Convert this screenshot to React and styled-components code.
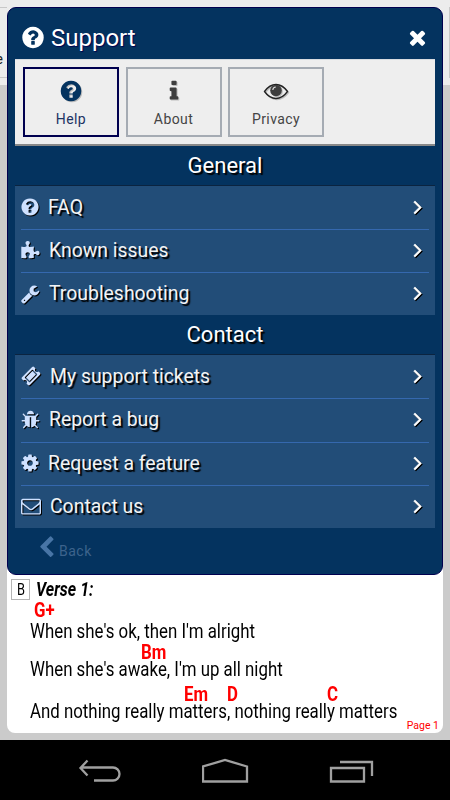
import React from "react";
import styled, { createGlobalStyle } from "styled-components";

const ICONS = {
	question: "M1024 1376v-192q0-14-9-23t-23-9h-192q-14 0-23 9t-9 23v192q0 14 9 23t23 9h192q14 0 23-9t9-23zm256-672q0-88-55.5-163t-138.5-116-170-41q-243 0-371 213-15 24 8 42l132 100q7 6 19 6 16 0 25-12 53-68 86-92 34-24 86-24 48 0 85.5 26t37.5 59q0 38-20 61t-68 45q-63 28-115.5 86.5t-52.5 125.5v36q0 14 9 23t23 9h192q14 0 23-9t9-23q0-19 21.5-49.5t54.5-49.5q32-18 49-28.5t46-35 44.5-48 28-60.5 12.5-81zm384 192q0 209-103 385.5t-279.5 279.5-385.5 103-385.5-103-279.5-279.5-103-385.5 103-385.5 279.5-279.5 385.5-103 385.5 103 279.5 279.5 103 385.5z",
	times: "M1490 1322q0 40-28 68l-136 136q-28 28-68 28t-68-28l-294-294-294 294q-28 28-68 28t-68-28l-136-136q-28-28-28-68t28-68l294-294-294-294q-28-28-28-68t28-68l136-136q28-28 68-28t68 28l294 294 294-294q28-28 68-28t68 28l136 136q28 28 28 68t-28 68l-294 294 294 294q28 28 28 68z",
	info: "M1216 1344v128q0 26-19 45t-45 19h-512q-26 0-45-19t-19-45v-128q0-26 19-45t45-19h64v-384h-64q-26 0-45-19t-19-45v-128q0-26 19-45t45-19h384q26 0 45 19t19 45v576h64q26 0 45 19t19 45zm-128-1152v192q0 26-19 45t-45 19h-256q-26 0-45-19t-19-45v-192q0-26 19-45t45-19h256q26 0 45 19t19 45z",
	puzzle: "M1755 1083q0 81-44.5 135t-123.5 54q-41 0-77.5-17.5t-59-38-56.5-38-71-17.5q-110 0-110 124 0 39 16 115t15 115v5q-22 0-33 1-34 3-97.5 11.5t-115.5 13.5-98 5q-61 0-103-26.5t-42-83.5q0-37 17.5-71t38-56.5 38-59 17.5-77.5q0-79-54-123.5t-135-44.5q-84 0-143 45.5t-59 127.5q0 43 15 83t33.5 64.5 33.5 53 15 50.5q0 45-46 89-37 35-117 35-95 0-245-24-9-2-27.5-4t-27.5-4l-13-2q-1 0-3-1-2 0-2-1v-1024q2 1 17.5 3.5t34 5 21.5 3.5q150 24 245 24 80 0 117-35 46-44 46-89 0-22-15-50.5t-33.5-53-33.5-64.5-15-83q0-82 59-127.5t144-45.5q80 0 134 44.5t54 123.5q0 41-17.5 77.5t-38 59-38 56.5-17.5 71q0 57 42 83.5t103 26.5q64 0 180-15t163-17v2q-1 2-3.5 17.5t-5 34-3.5 21.5q-24 150-24 245 0 80 35 117 44 46 89 46 22 0 50.5-15t53-33.5 64.5-33.5 83-15q82 0 127.5 59t45.5 143z",
	wrench: "M448 1472q0-26-19-45t-45-19-45 19-19 45 19 45 45 19 45-19 19-45zm644-420l-682 682q-37 37-90 37-52 0-91-37l-106-108q-38-36-38-90 0-53 38-91l681-681q39 98 114.5 173.5t173.5 114.5zm634-435q0 39-23 106-47 134-164.5 217.5t-258.5 83.5q-185 0-316.5-131.5t-131.5-316.5 131.5-316.5 316.5-131.5q58 0 121.5 16.5t107.5 46.5q16 11 16 28t-16 28l-293 169v224l193 107q5-3 79-48.5t135.5-81 70.5-35.5q15 0 23.5 10t8.5 25z",
	ticket: "M1024 452l316 316-572 572-316-316zm-211 979l618-618q19-19 19-45t-19-45l-362-362q-18-18-45-18t-45 18l-618 618q-19 19-19 45t19 45l362 362q18 18 45 18t45-18zm889-637l-907 908q-37 37-90.5 37t-90.5-37l-126-126q56-56 56-136t-56-136-136-56-136 56l-125-126q-37-37-37-90.5t37-90.5l907-906q37-37 90.5-37t90.5 37l125 125q-56 56-56 136t56 136 136 56 136-56l126 125q37 37 37 90.5t-37 90.5z",
	bug: "M1696 960q0 26-19 45t-45 19h-224q0 171-67 290l208 209q19 19 19 45t-19 45q-18 19-45 19t-45-19l-198-197q-5 5-15 13t-42 28.5-65 36.5-82 29-97 13v-896h-128v896q-51 0-101.5-13.5t-87-33-66-39-43.5-32.5l-15-14-183 207q-20 21-48 21-24 0-43-16-19-18-20.5-44.5t15.5-46.5l202-227q-58-114-58-274h-224q-26 0-45-19t-19-45 19-45 45-19h224v-294l-173-173q-19-19-19-45t19-45 45-19 45 19l173 173h844l173-173q19-19 45-19t45 19 19 45-19 45l-173 173v294h224q26 0 45 19t19 45zm-480-576h-640q0-133 93.5-226.5t226.5-93.5 226.5 93.5 93.5 226.5z",
	cog: "M1152 896q0-106-75-181t-181-75-181 75-75 181 75 181 181 75 181-75 75-181zm512-109v222q0 12-8 23t-20 13l-185 28q-19 54-39 91 35 50 107 138 10 12 10 25t-9 23q-27 37-99 108t-94 71q-12 0-26-9l-138-108q-44 23-91 38-16 136-29 186-7 28-36 28h-222q-14 0-24.5-8.5t-11.5-21.5l-28-184q-49-16-90-37l-141 107q-10 9-25 9-14 0-25-11-126-114-165-168-7-10-7-23 0-12 8-23 15-21 51-66.5t54-70.5q-27-50-41-99l-183-27q-13-2-21-12.5t-8-23.5v-222q0-12 8-23t19-13l186-28q14-46 39-92-40-57-107-138-10-12-10-24 0-10 9-23 26-36 98.5-107.5t94.5-71.5q13 0 26 10l138 107q44-23 91-38 16-136 29-186 7-28 36-28h222q14 0 24.5 8.5t11.5 21.5l28 184q49 16 90 37l142-107q9-9 24-9 13 0 25 10 129 119 165 170 7 8 7 22 0 12-8 23-15 21-51 66.5t-54 70.5q26 50 41 98l183 28q13 2 21 12.5t8 23.5z",
	envelope: "M1664 1504v-768q-32 36-69 66-268 206-426 338-51 43-83 67t-86.5 48.5-102.5 24.5h-2q-48 0-102.5-24.5t-86.5-48.5-83-67q-158-132-426-338-37-30-69-66v768q0 13 9.5 22.5t22.5 9.5h1472q13 0 22.5-9.5t9.5-22.5zm0-1051v-24.5l-.5-13-3-12.5-5.5-9-9-7.5-14-2.5h-1472q-13 0-22.5 9.5t-9.5 22.5q0 168 147 284 193 152 401 317 6 5 35 29.5t46 37.5 44.5 31.5 50.5 27.5 43 9h2q20 0 43-9t50.5-27.5 44.5-31.5 46-37.5 35-29.5q208-165 401-317 54-43 100.5-115.5t46.5-131.5zm128-37v1088q0 66-47 113t-113 47h-1472q-66 0-113-47t-47-113v-1088q0-66 47-113t113-47h1472q66 0 113 47t47 113z",
	left: "M1427 301l-531 531 531 531q19 19 19 45t-19 45l-166 166q-19 19-45 19t-45-19l-742-742q-19-19-19-45t19-45l742-742q19-19 45-19t45 19l166 166q19 19 19 45t-19 45z",
	right: "M1171 960q0 13-10 23l-466 466q-10 10-23 10t-23-10l-50-50q-10-10-10-23t10-23l393-393-393-393q-10-10-10-23t10-23l50-50q10-10 23-10t23 10l466 466q10 10 10 23z",
};

const GlobalStyle = createGlobalStyle`
	* {
		box-sizing: border-box;
	}
	body {
		margin: 0;
		background: #000;
		font-family: Roboto, "Liberation Sans", sans-serif;
	}
`;

const Screen = styled.div`
	position: relative;
	width: 450px;
	height: 800px;
	display: flex;
	flex-direction: column;
	overflow: hidden;
	background: #cbcbcb;
`;

/* toolbar of the song page, only its edges show around the dialog */
const Toolbar = styled.div`
	flex: none;
	display: flex;
	justify-content: space-between;
	height: 85px;
	padding-top: 7px;
	background: #ececec;
`;

const ToolButton = styled.div`
	width: ${props => props.w}px;
	height: 71px;
	border: solid #c8c8c8;
	border-width: ${props => props.borders};
	font-size: 14px;
	line-height: 15px;
	padding: 44px ${props => props.inset || 0}px 0 0;
	color: #222;
	white-space: nowrap;
	overflow: hidden;
	direction: rtl;
`;

const Sheet = styled.div`
	flex: none;
	display: flex;
	flex-direction: column;
	justify-content: flex-end;
	width: 436px;
	height: 648px;
	margin-left: 7px;
	background: #fff;
	border-radius: 8px;
	color: #000;
`;

const VerseHead = styled.div`
	display: flex;
	align-items: center;
	height: 22px;
	padding-left: 4px;
	gap: 6px;
`;

const VerseKey = styled.span`
	width: 19px;
	height: 21px;
	border: 1px solid #b5b5b5;
	font-size: 16px;
	line-height: 20px;
	text-align: center;
	span {
		display: inline-block;
		transform: scaleX(0.8);
	}
`;

const Narrow = styled.span`
	display: inline-block;
	transform: scaleX(${props => props.ratio || 0.842});
	transform-origin: left center;
	white-space: pre;
`;

const VerseName = styled(Narrow)`
	font-size: 20px;
	font-weight: 700;
	font-style: italic;
	line-height: 22px;
`;

const Line = styled.div`
	position: relative;
	height: ${props => props.h}px;
	padding: ${props => props.h - 22}px 0 0 23px;
	font-size: 20px;
	line-height: 23px;
`;

const Chord = styled(Narrow)`
	position: absolute;
	left: ${props => props.x}px;
	bottom: ${props => props.up || 17}px;
	color: #f00;
	font-weight: 700;
	line-height: 22px;
`;

const PageNo = styled.div`
	height: 11px;
	margin: -2px 4px 2px 0;
	font-size: 10.5px;
	line-height: 11px;
	text-align: right;
	color: #f00;
`;

const NavBar = styled.div`
	flex: none;
	height: 60px;
	margin-top: 7px;
	padding: 16px 76px 0 78px;
	display: flex;
	justify-content: space-between;
	background: #000;
`;

const Dialog = styled.div`
	position: absolute;
	left: 7px;
	top: 7px;
	width: 436px;
	height: 568px;
	padding: 0 7px;
	border: 1px solid #00004f;
	border-radius: 9px;
	background: #04335f;
	color: #fff;
`;

const Header = styled.div`
	display: flex;
	align-items: center;
	height: 51px;
	padding: 8px 6px 0 7px;
	font-size: 24px;
	line-height: 30px;
	gap: 7px;
	text-shadow: 1px 1px 1px #00004f;
	svg:last-child {
		margin-left: auto;
	}
`;

const Tabs = styled.div`
	display: flex;
	gap: 6.5px;
	height: 87px;
	padding: 7px 8px 0;
	background: #eee;
	border-top: 1px solid #d8dbe0;
	border-bottom: 2px solid #888;
`;

const Tab = styled.div`
	display: flex;
	flex-direction: column;
	align-items: center;
	width: 96px;
	height: 70px;
	padding-top: 10px;
	border: 2px solid ${props => (props.active ? "#00004f" : "#a5abb3")};
	color: ${props => (props.active ? "#04335f" : "#3e3e3e")};
	svg {
		filter: drop-shadow(1.5px 1.5px 0.5px #bbb);
	}
`;

const TabName = styled.span`
	margin-top: 7px;
	font-size: 14px;
	line-height: 18px;
	letter-spacing: 0.4px;
	color: ${props => (props.active ? "#1c3363" : "#444")};
`;

const SectionTitle = styled.div`
	height: 40px;
	border-bottom: 1px solid #0b2440;
	font-size: 22px;
	line-height: 40px;
	text-align: center;
	text-shadow: 2px 2px 1px #000;
`;

const List = styled.div`
	padding: 0 6px;
	background: #224d78;
`;

const Row = styled.div`
	display: flex;
	align-items: center;
	height: ${props => props.h}px;
	padding-bottom: 1px;
	font-size: 19.4px;
	color: #f4f4f4;
	& + & {
		border-top: 1px solid #3568ae;
	}
	svg {
		color: #cfe1ff;
		filter: drop-shadow(1.5px 1.5px 0.5px #000);
	}
	svg:last-child {
		margin: 0 2px 0 auto;
		color: #fff;
		stroke: #fff;
		stroke-width: 50px;
	}
`;

const RowName = styled.span`
	margin-left: 9px;
	text-shadow: 2px 2px 1px #000;
`;

const Back = styled.div`
	display: flex;
	align-items: center;
	height: 38px;
	padding-left: 24px;
	gap: 5px;
	color: #4875a6;
`;

const BackName = styled.span`
	padding-top: 8px;
	font-size: 14px;
	letter-spacing: 0.5px;
	color: #3d638c;
`;

const Icon = ({ name, size, box = "0 0 1792 1792", width }) => (
	<svg width={width || size} height={size} viewBox={box} fill="currentColor">
		<path d={ICONS[name]} />
	</svg>
);

const Eye = () => (
	<svg width="26" height="24" viewBox="0 0 26 24" fill="none">
		<path d="M1.500 12.500q5-7 11.500-7t11.500 7q-5 7-11.500 7t-11.500-7z" stroke="#222" strokeWidth="1.300" />
		<circle cx="13" cy="11.500" r="5.800" fill="#3e3e3e" />
		<path d="M9.800 11a3.200 3.200 0 0 1 3-3" stroke="#ddd" strokeWidth="1.100" />
	</svg>
);

const GENERAL = [
	{ icon: "question", name: "FAQ", w: 18, box: "128 0 1536 1792" },
	{ icon: "puzzle", name: "Known issues", w: 19, box: "64 0 1728 1792" },
	{ icon: "wrench", name: "Troubleshooting", w: 19, box: "64 0 1728 1792" },
];

const CONTACT = [
	{ icon: "ticket", name: "My support tickets", w: 20 },
	{ icon: "bug", name: "Report a bug", w: 19, box: "64 0 1664 1792" },
	{ icon: "cog", name: "Request a feature", w: 18, box: "128 0 1536 1792" },
	{ icon: "envelope", name: "Contact us", w: 20 },
];

const Menu = ({ items, rowHeight }) => (
	<List>
		{items.map(item => (
			<Row key={item.name} h={rowHeight}>
				<Icon name={item.icon} size={20} width={item.w} box={item.box} />
				<RowName>{item.name}</RowName>
				<Icon name="right" size={23} width={15} box="448 64 1152 1792" />
			</Row>
		))}
	</List>
);

const SupportDialog = () => (
	<Dialog>
		<Header>
			<Icon name="question" size={25} width={22} box="128 0 1536 1792" />
			<span>Support</span>
			<Icon name="times" size={23} />
		</Header>
		<Tabs>
			<Tab active>
				<Icon name="question" size={24} />
				<TabName active>Help</TabName>
			</Tab>
			<Tab>
				<Icon name="info" size={24} />
				<TabName>About</TabName>
			</Tab>
			<Tab>
				<Eye />
				<TabName>Privacy</TabName>
			</Tab>
		</Tabs>
		<SectionTitle>General</SectionTitle>
		<Menu items={GENERAL} rowHeight={43} />
		<SectionTitle>Contact</SectionTitle>
		<Menu items={CONTACT} rowHeight={43.25} />
		<Back>
			<Icon name="left" size={23} width={15} box="320 0 1152 1792" />
			<BackName>Back</BackName>
		</Back>
	</Dialog>
);

const App = () => (
	<>
		<GlobalStyle />
		<Screen>
			<Toolbar>
				<ToolButton w={7} borders="1px 0 1px 0" inset={4}>e</ToolButton>
				<ToolButton w={1} borders="0 0 0 1px" />
			</Toolbar>
			<Sheet>
				<VerseHead>
					<VerseKey><span>B</span></VerseKey>
					<VerseName ratio={0.8}>Verse 1:</VerseName>
				</VerseHead>
				<Line h={42}>
					<Chord x={27} up={21}>G+</Chord>
					<Narrow>When she's ok, then I'm alright</Narrow>
				</Line>
				<Line h={38}>
					<Chord x={134}>Bm</Chord>
					<Narrow>When she's awake, I'm up all night</Narrow>
				</Line>
				<Line h={42}>
					<Chord x={177}>Em</Chord>
					<Chord x={220}>D</Chord>
					<Chord x={320}>C</Chord>
					<Narrow>And nothing really matters, nothing really matters</Narrow>
				</Line>
				<PageNo>Page 1</PageNo>
			</Sheet>
			<NavBar>
				<svg width="44" height="30" fill="none" stroke="#a0a0a0" strokeWidth="2.300">
					<path d="M9.500 4.500l-7 7.500 7 7.500M3 11.500h32a6.500 6.500 0 0 1 0 13h-19" />
				</svg>
				<svg width="48" height="30" fill="none" stroke="#a0a0a0" strokeWidth="2.300">
					<path d="M1 25.500v-15l22-6.500 22 6.500v15z" />
				</svg>
				<svg width="45" height="30" fill="none" stroke="#a0a0a0" strokeWidth="2.300">
					<path d="M2 12h33v13.500h-33zM11 6h32v14" />
				</svg>
			</NavBar>
			<SupportDialog />
		</Screen>
	</>
);

export default App;
